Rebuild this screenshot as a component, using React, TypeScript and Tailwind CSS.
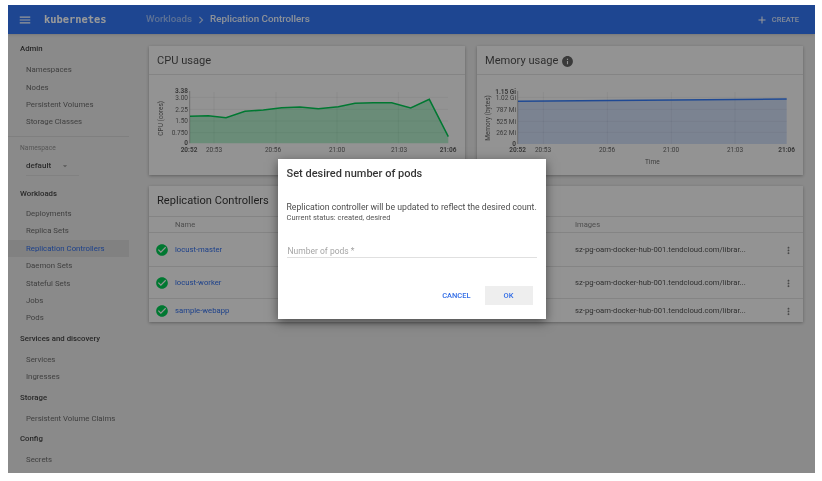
import React from 'react';
import { MdAdd, MdArrowDropDown, MdCheckCircle, MdChevronRight, MdInfo, MdMenu, MdMoreVert } from 'react-icons/md';

const sidebarItem = 'h-[17.4px] pl-[18px] flex items-center text-[7.8px] text-[#00000090]';
const sectionHead = 'pl-[12px] flex items-center text-[7.8px] font-medium text-[#000000bb]';
const cardHead = 'h-[29px] pl-[8px] pt-[2px] flex items-center text-[11.1px] text-[#000000b3] border-b border-[#0000001a]';

const Item = ({ label, active }: { label: string; active?: boolean }) => (
  <div className={active ? `${sidebarItem} bg-[#0000000f] !text-[#326de6]` : sidebarItem}>{label}</div>
);

const CpuChart = () => {
  const pts = '41,41.3 59.3,40.7 77,42.7 96,36.3 114.3,35 132.7,32.7 151,32 169.3,33.7 189.3,31.7 206,28.3 224.3,27.7 242.7,27.7 261.7,33 280.3,24.3 299.3,61.7';
  return (
    <svg width="316" height="100" className="block" fontFamily="Roboto, sans-serif" fontSize="6.5" fill="#000000a0">
      {[22.3, 34.3, 46, 57.7].map(y => <line key={y} x1="41" x2="299" y1={y} y2={y} stroke="#00000018" strokeWidth="0.6" />)}
      {[65, 127, 188, 249.3].map(x => <line key={x} x1={x} x2={x} y1="17" y2="68.3" stroke="#00000018" strokeWidth="0.6" />)}
      <polygon points={`41,68.3 ${pts} 299.3,68.3`} fill="#00c853" fillOpacity="0.28" />
      <polyline points={pts} fill="none" stroke="#00c853" strokeWidth="1.5" />
      <line x1="40.7" x2="40.7" y1="16" y2="68.3" stroke="#00000060" strokeWidth="0.7" />
      <g textAnchor="end">
        <text x="39" y="18" fontWeight="700">3.38</text>
        <text x="39" y="24.5">3.00</text>
        <text x="39" y="36.5">2.25</text>
        <text x="39" y="48.2">1.50</text>
        <text x="39" y="60">0.750</text>
        <text x="39" y="70" fontWeight="700">0</text>
      </g>
      <g textAnchor="middle">
        <text x="40" y="76.5" fontWeight="700">20:52</text>
        <text x="65" y="76.5">20:53</text>
        <text x="124" y="76.5">20:56</text>
        <text x="188" y="76.5">21:00</text>
        <text x="250" y="76.5">21:03</text>
        <text x="299" y="76.5" fontWeight="700">21:06</text>
        <text transform="translate(14 43.3) rotate(-90)">CPU (cores)</text>
      </g>
    </svg>
  );
};

const MemoryChart = () => (
  <svg width="326" height="100" className="block" fontFamily="Roboto, sans-serif" fontSize="6.5" fill="#000000a0">
    {[22.3, 34.3, 46.3, 57.3].map(y => <line key={y} x1="41" x2="309.7" y1={y} y2={y} stroke="#00000018" strokeWidth="0.6" />)}
    {[66.3, 130.3, 194.3, 258].map(x => <line key={x} x1={x} x2={x} y1="17" y2="69" stroke="#00000018" strokeWidth="0.6" />)}
    <polygon points="41,69 41,26.3 309.7,24 309.7,69" fill="#326de6" fillOpacity="0.2" />
    <line x1="41" x2="309.7" y1="26.3" y2="24" stroke="#347bf7" strokeWidth="1.5" />
    <line x1="40.7" x2="40.7" y1="16" y2="69" stroke="#00000060" strokeWidth="0.7" />
    <g textAnchor="end">
      <text x="39" y="18.5" fontWeight="700">1.15 Gi</text>
      <text x="39" y="24.5">1.02 Gi</text>
      <text x="39" y="36.5">787 Mi</text>
      <text x="39" y="48.5">525 Mi</text>
      <text x="39" y="59.5">262 Mi</text>
      <text x="39" y="70.5" fontWeight="700">0</text>
    </g>
    <g textAnchor="middle">
      <text x="40.7" y="77" fontWeight="700">20:52</text>
      <text x="66" y="77">20:53</text>
      <text x="130" y="77">20:56</text>
      <text x="194" y="77">21:00</text>
      <text x="258" y="77">21:03</text>
      <text x="309.7" y="77" fontWeight="700">21:06</text>
      <text x="175.3" y="88.5">Time</text>
      <text transform="translate(12.5 43) rotate(-90)">Memory (bytes)</text>
    </g>
  </svg>
);

const rows = [
  { name: 'locust-master', height: 'h-[34px]' },
  { name: 'locust-worker', height: 'h-[32px]' },
  { name: 'sample-webapp', height: 'h-[23px]' },
];

export default function App() {
  return (
    <div className="w-[822px] h-[481px] bg-white pl-[8px] pt-[5px] overflow-hidden blur-[0.7px] font-['Roboto',sans-serif]">
      <div className="relative w-[807px] h-[468px] overflow-hidden bg-[#e6e6e6] flex flex-col">
        {/* toolbar */}
        <div className="h-[29px] shrink-0 bg-[#3276f2] flex items-center text-white shadow-sm">
          <MdMenu className="ml-[10px] w-[14px] h-[14px]" />
          <span className="ml-[12px] w-[102px] font-['DejaVu_Sans_Mono',monospace] font-bold text-[10.4px]">kubernetes</span>
          <span className="text-[9.7px] font-medium text-white/50">Workloads</span>
          <MdChevronRight className="mx-[1px] w-[16px] h-[14px] text-white/70" />
          <span className="text-[9.8px] font-medium text-white/90">Replication Controllers</span>
          <MdAdd className="ml-auto w-[12px] h-[12px]" />
          <span className="ml-[4px] mr-[16px] text-[7.5px] font-medium text-white/80">CREATE</span>
        </div>

        <div className="flex flex-1 min-h-0">
          {/* sidebar */}
          <div className="w-[129px] shrink-0 pr-[8px] overflow-hidden">
            <div className={`${sectionHead} h-[27.3px] pt-[2px]`}>Admin</div>
            <Item label="Namespaces" />
            <Item label="Nodes" />
            <Item label="Persistent Volumes" />
            <Item label="Storage Classes" />
            <div className="mt-[5px] border-t border-[#00000014]" />
            <div className="h-[22px] pl-[12px] flex items-center text-[6.7px] text-[#00000066]">Namespace</div>
            <div className="h-[14px] pl-[18px] flex items-center text-[8px] font-medium text-[#000000b3]">
              default
              <MdArrowDropDown className="ml-[9px] w-[10px] h-[10px] text-[#00000060]" />
            </div>
            <div className="ml-[18px] mr-[50px] mt-[2px] border-t border-[#0000000f]" />
            <div className={`${sectionHead} h-[29.3px] pt-[6px]`}>Workloads</div>
            <Item label="Deployments" />
            <Item label="Replica Sets" />
            <Item label="Replication Controllers" active />
            <Item label="Daemon Sets" />
            <Item label="Stateful Sets" />
            <Item label="Jobs" />
            <Item label="Pods" />
            <div className={`${sectionHead} h-[24px]`}>Services and discovery</div>
            <Item label="Services" />
            <Item label="Ingresses" />
            <div className={`${sectionHead} h-[24px]`}>Storage</div>
            <Item label="Persistent Volume Claims" />
            <div className={`${sectionHead} h-[24px]`}>Config</div>
            <Item label="Secrets" />
            <Item label="Config Maps" />
          </div>

          {/* main */}
          <div className="flex-1 min-w-0 pt-[12px] pl-[12px] pr-[12px] flex flex-col gap-[11px]">
            <div className="flex gap-[12px]">
              <div className="w-[316px] h-[129px] bg-[#f6f6f6] shadow-[0_1px_3px_#0000004d]">
                <div className={cardHead}>CPU usage</div>
                <CpuChart />
              </div>
              <div className="w-[326px] h-[129px] bg-[#f6f6f6] shadow-[0_1px_3px_#0000004d]">
                <div className={cardHead}>
                  Memory usage
                  <MdInfo className="ml-[3px] w-[13px] h-[13px] text-[#00000099]" />
                </div>
                <MemoryChart />
              </div>
            </div>

            <div className="w-[654px] bg-[#f6f6f6] shadow-[0_1px_3px_#0000004d]">
              <div className="h-[31px] pl-[8px] pt-[1px] flex items-center text-[11.1px] text-[#000000cc] border-b border-[#0000001a]">Replication Controllers</div>
              <div className="h-[16px] pt-[1px] flex items-center text-[7.6px] text-[#00000080] border-b border-[#0000001a]">
                <span className="pl-[26px] w-[426px]">Name</span>
                <span>Images</span>
              </div>
              {rows.map((row, i) => (
                <div key={row.name} className={`${row.height} pt-[1px] flex items-center text-[7.7px] ${i < 2 ? 'border-b border-[#0000001a]' : ''}`}>
                  <MdCheckCircle className="ml-[6px] w-[14px] h-[14px] text-[#00c853]" />
                  <span className="ml-[6px] w-[400px] text-[7.7px] text-[#326de6]">{row.name}</span>
                  <span className="w-[208px] text-[#000000b3] whitespace-nowrap">sz-pg-oam-docker-hub-001.tendcloud.com/librar...</span>
                  <MdMoreVert className="w-[11px] h-[11px] text-[#00000080]" />
                </div>
              ))}
            </div>
          </div>
        </div>

        {/* dialog */}
        <div className="absolute inset-0 bg-black/40 flex items-center justify-center">
          <div className="w-[268px] h-[160px] bg-white shadow-[0_3px_10px_#00000080] px-[9px] flex flex-col">
            <div className="h-[30px] flex items-center text-[11px] font-medium text-[#000000cc]">Set desired number of pods</div>
            <div className="mt-[13px] text-[8.7px] leading-[11px] whitespace-nowrap text-[#000000bb]">Replication controller will be updated to reflect the desired count.</div>
            <div className="text-[7.5px] leading-[9px] text-[#000000b3]">Current status: created, desired</div>
            <div className="mt-[20px] h-[16px] pl-[1px] pt-[4px] flex items-center text-[8.5px] text-[#00000061] border-b border-[#0000001f]">Number of pods *</div>
            <div className="mt-[28px] flex items-center justify-end">
              <span className="mr-[14px] text-[7.5px] font-medium text-[#326de6]">CANCEL</span>
              <span className="w-[48px] h-[19px] mr-[4px] bg-[#eeeeee] flex items-center justify-center text-[7.5px] font-medium text-[#326de6]">OK</span>
            </div>
          </div>
        </div>
      </div>
    </div>
  );
}
